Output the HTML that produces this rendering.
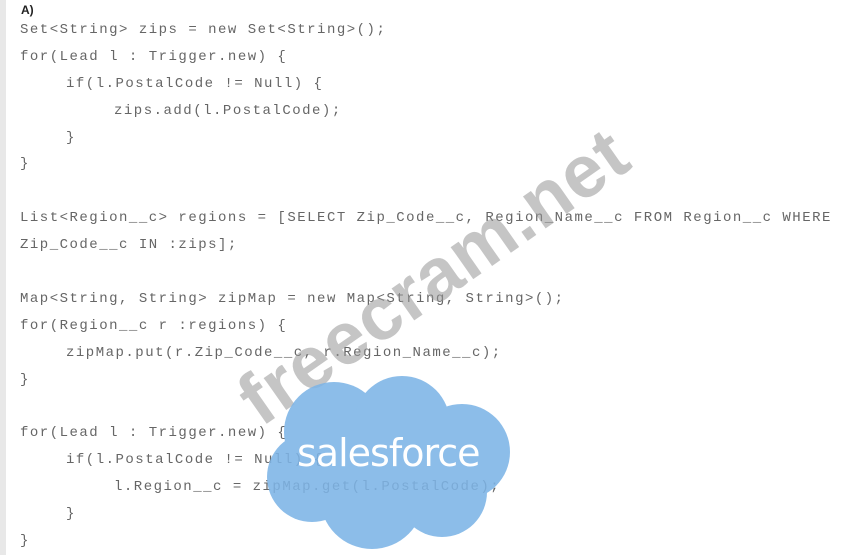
<!DOCTYPE html>
<html><head><style>
html,body{margin:0;padding:0;background:#fff;width:851px;height:555px;overflow:hidden;position:relative}
.bar{position:absolute;left:0;top:0;width:6px;height:555px;background:#e8e8e8}
.h{position:absolute;left:21px;top:3px;font:bold 12px "Liberation Sans",sans-serif;color:#222}
.l{position:absolute;font:14px "Liberation Mono",monospace;letter-spacing:1.5px;color:#666;white-space:pre;line-height:16px;margin-top:2px}
.wm{position:absolute;left:222px;top:372px;font:bold 74px "Liberation Sans",sans-serif;color:rgba(150,150,150,.55);transform:rotate(-35deg);transform-origin:left top;white-space:nowrap;letter-spacing:1px}
.cloud{position:absolute;left:262px;top:372px;opacity:.88}
.sf{position:absolute;left:297px;top:431px;font:38px "DejaVu Sans","Liberation Sans",sans-serif;color:#fff;letter-spacing:-1px}
</style></head><body>
<div class="bar"></div>
<div class="h">A)</div>
<div class="l" style="left:20px;top:20px">Set&lt;String&gt; zips = new Set&lt;String&gt;();</div>
<div class="l" style="left:20px;top:47px">for(Lead l : Trigger.new) {</div>
<div class="l" style="left:66px;top:74px">if(l.PostalCode != Null) {</div>
<div class="l" style="left:114px;top:101px">zips.add(l.PostalCode);</div>
<div class="l" style="left:66px;top:128px">}</div>
<div class="l" style="left:20px;top:154px">}</div>
<div class="l" style="left:20px;top:208px">List&lt;Region__c&gt; regions = [SELECT Zip_Code__c, Region_Name__c FROM Region__c WHERE</div>
<div class="l" style="left:20px;top:235px">Zip_Code__c IN :zips];</div>
<div class="l" style="left:20px;top:289px">Map&lt;String, String&gt; zipMap = new Map&lt;String, String&gt;();</div>
<div class="l" style="left:20px;top:316px">for(Region__c r :regions) {</div>
<div class="l" style="left:66px;top:343px">zipMap.put(r.Zip_Code__c, r.Region_Name__c);</div>
<div class="l" style="left:20px;top:370px">}</div>
<div class="l" style="left:20px;top:423px">for(Lead l : Trigger.new) {</div>
<div class="l" style="left:66px;top:450px">if(l.PostalCode != Null) {</div>
<div class="l" style="left:114px;top:477px">l.Region__c = zipMap.get(l.PostalCode);</div>
<div class="l" style="left:66px;top:504px">}</div>
<div class="l" style="left:20px;top:531px">}</div>
<div class="wm">freecram.net</div>
<svg class="cloud" width="252" height="180" viewBox="0 0 252 180">
<g fill="rgb(125,180,230)">
<circle cx="72" cy="60" r="50"/>
<circle cx="140" cy="52" r="48"/>
<circle cx="200" cy="80" r="48"/>
<circle cx="50" cy="105" r="45"/>
<circle cx="110" cy="125" r="52"/>
<circle cx="180" cy="120" r="45"/>
<rect x="40" y="60" width="170" height="80"/>
</g>
</svg>
<div class="sf">salesforce</div>
</body></html>
